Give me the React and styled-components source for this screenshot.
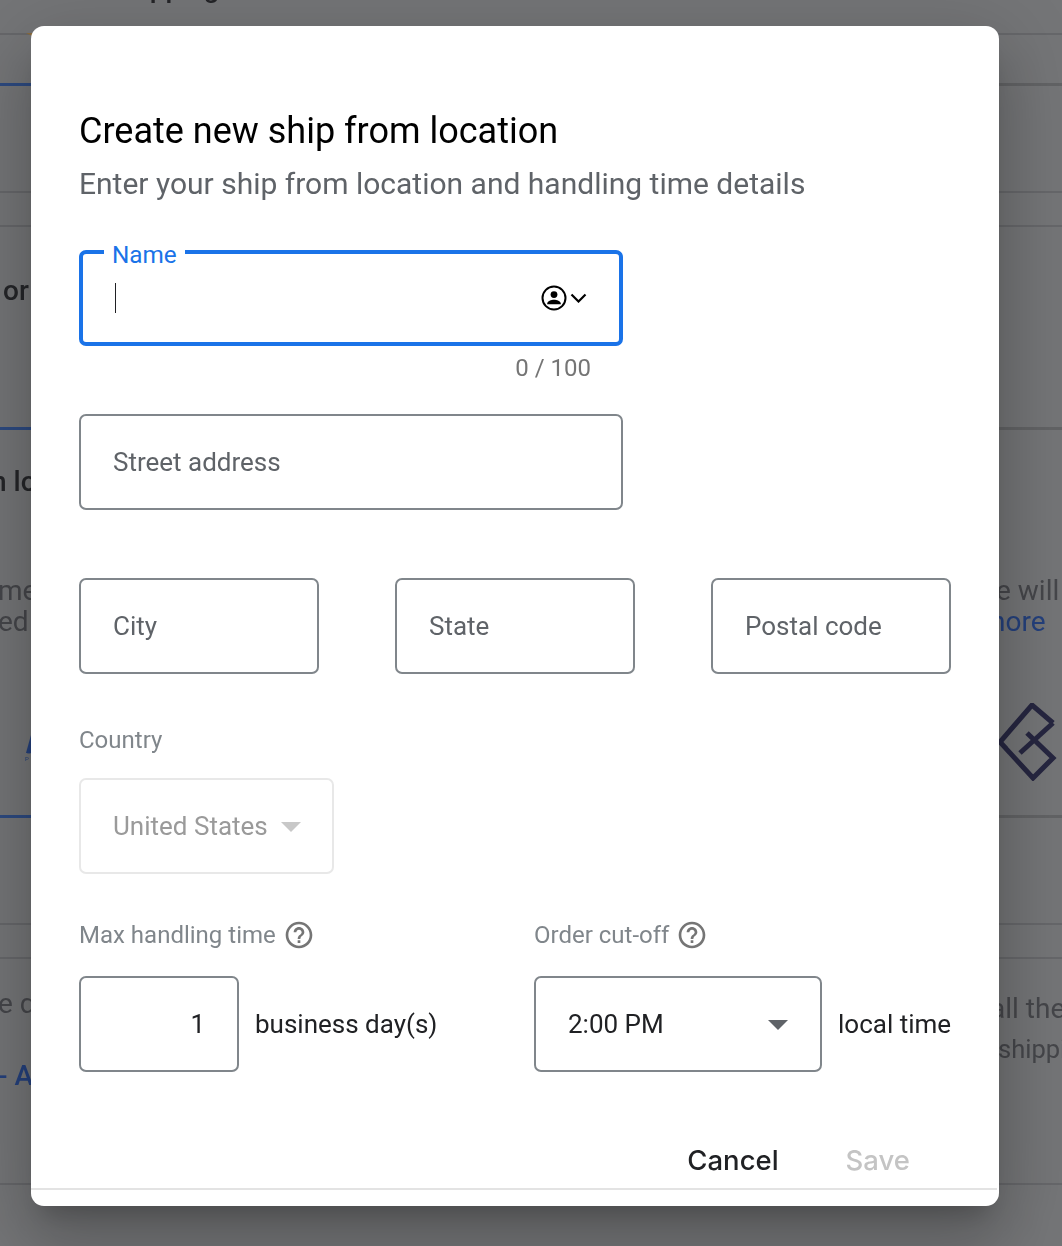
import React from "react";
import styled, { createGlobalStyle } from "styled-components";

const GlobalStyle = createGlobalStyle`
  html, body {
    margin: 0;
    padding: 0;
    background: #6f7072;
    font-family: Roboto, "Liberation Sans", sans-serif;
  }
`;

const Page = styled.div`
  position: relative;
  width: 1062px;
  height: 1246px;
  overflow: hidden;
  background: #747577;
`;

// the page behind the scrim, only slivers of it show round the dialog
const Backdrop = styled.div`
  position: absolute;
  inset: 0;
  filter: blur(0.6px);
`;

const Rule = styled.div`
  position: absolute;
  left: 0;
  right: 0;
  top: ${(props) => props.top}px;
  height: ${(props) => props.size || 2}px;
  background: ${(props) => (props.thick ? "#626365" : "#66676a")};
`;

const AccentRule = styled.div`
  position: absolute;
  left: 0;
  width: 40px;
  top: ${(props) => props.top}px;
  height: 3px;
  background: #2d4a80;
`;

const Fragment = styled.span`
  position: absolute;
  left: ${(props) => props.x}px;
  top: ${(props) => props.y}px;
  font-size: ${(props) => props.size || 28}px;
  line-height: 32px;
  white-space: nowrap;
  font-weight: ${(props) => (props.strong ? 500 : 400)};
  color: ${(props) =>
    props.link ? "#24407c" : props.strong ? "#242528" : "#45464a"};
`;

const LogoMark = styled.svg`
  position: absolute;
  left: ${(props) => props.x}px;
  top: ${(props) => props.y}px;
`;

const Scrim = styled.div`
  position: absolute;
  inset: 0;
  display: flex;
  align-items: flex-start;
  padding: 26px 0 0 31px;
`;

const Dialog = styled.div`
  width: 968px;
  height: 1180px;
  box-sizing: border-box;
  display: flex;
  flex-direction: column;
  background: #fff;
  border-radius: 13px;
  padding: 85px 48px 0;
  box-shadow: 0 18px 25px -12px rgba(0, 0, 0, 0.2),
    0 40px 63px 5px rgba(0, 0, 0, 0.14), 0 15px 77px 13px rgba(0, 0, 0, 0.12);
`;

const Title = styled.h2`
  margin: 0;
  font-size: 36px;
  line-height: 40px;
  font-weight: 400;
  color: #000;
`;

const Subtitle = styled.p`
  margin: 13px 0 0;
  font-size: 30px;
  line-height: 40px;
  font-weight: 400;
  color: #5f6368;
`;

const Field = styled.div`
  position: relative;
  box-sizing: border-box;
  display: flex;
  align-items: center;
  justify-content: ${(props) => props.justify || "flex-start"};
  flex: none;
  width: ${(props) => props.width}px;
  height: 96px;
  padding: 0 32px;
  border: ${(props) => (props.focused ? 4 : 2)}px solid
    ${(props) =>
      props.focused ? "#1a73e8" : props.disabled ? "#e8e8e8" : "#80868b"};
  border-radius: 7px;
  font-size: 26px;
  color: ${(props) => (props.disabled ? "#9a9a9a" : "#202124")};
`;

const Placeholder = styled.span`
  color: #5f6368;
`;

const FloatingLabel = styled.span`
  position: absolute;
  left: 21px;
  top: -14px;
  padding: 0 8px;
  background: #fff;
  font-size: 24.3px;
  line-height: 30px;
  color: #1a73e8;
`;

const Caret = styled.span`
  width: 1px;
  height: 30px;
  background: #202124;
`;

const NameIcons = styled.div`
  position: absolute;
  right: 32px;
  top: 50%;
  transform: translateY(-50%);
  display: flex;
  align-items: center;
  gap: 3px;
`;

const Counter = styled.div`
  width: 512px;
  margin-top: 7px;
  text-align: right;
  font-size: 24px;
  line-height: 30px;
  color: #757575;
`;

const FieldRow = styled.div`
  display: flex;
  gap: 76px;
  margin-top: ${(props) => props.top}px;
`;

const SectionLabel = styled.div`
  display: flex;
  align-items: center;
  gap: 7px;
  font-size: 24px;
  line-height: 28px;
  color: #80868b;
`;

const Spaced = styled.div`
  margin-top: ${(props) => props.top}px;
`;

const TimingRow = styled.div`
  display: flex;
  margin-top: 45px;
`;

const TimingColumn = styled.div`
  width: ${(props) => props.width}px;
`;

const InlineControl = styled.div`
  display: flex;
  align-items: center;
  gap: 16px;
  margin-top: 25px;
  font-size: 26px;
  white-space: nowrap;
  color: #202124;
`;

const Arrow = styled.span`
  flex: none;
  width: 0;
  height: 0;
  margin-top: 1px;
  border-left: 10px solid transparent;
  border-right: 10px solid transparent;
  border-top: 10px solid ${(props) => (props.disabled ? "#c8c8c8" : "#5f6368")};
`;

const CountryValue = styled.span`
  margin-right: 13px;
  white-space: nowrap;
`;

const Actions = styled.div`
  display: flex;
  justify-content: flex-end;
  align-items: center;
  gap: 67px;
  margin-top: 70px;
  padding-right: 41px;
`;

const ActionButton = styled.button`
  border: 0;
  padding: 0;
  background: none;
  font-family: Inter, Roboto, sans-serif;
  font-size: 27.5px;
  line-height: 36px;
  font-weight: 500;
  color: ${(props) => (props.disabled ? "#c4c4c4" : "#202124")};
`;

const Divider = styled.div`
  height: 2px;
  margin: 10px -46px 0 -48px;
  background: #e3e3e3;
`;

const HelpIcon = () => (
  <svg width="32" height="32" viewBox="0 0 24 24" fill="#757575">
    <path d="M11 18h2v-2h-2v2zm1-16C6.48 2 2 6.48 2 12s4.48 10 10 10 10-4.48 10-10S17.52 2 12 2zm0 18c-4.41 0-8-3.59-8-8s3.59-8 8-8 8 3.59 8 8-3.59 8-8 8zm0-14c-2.21 0-4 1.79-4 4h2c0-1.1.9-2 2-2s2 .9 2 2c0 2-3 1.75-3 5h2c0-2.25 3-2.5 3-5 0-2.21-1.79-4-4-4z" />
  </svg>
);

const PersonIcon = () => (
  <svg width="26" height="26" viewBox="0 0 26 26">
    <circle cx="13" cy="13" r="11.5" fill="none" stroke="#000" strokeWidth="2" />
    <circle cx="13" cy="9.6" r="3.4" fill="#000" />
    <path d="M6.2 18.6c0-2.6 4.2-3.9 6.8-3.9s6.8 1.3 6.8 3.9v.6H6.2z" fill="#000" />
  </svg>
);

const ChevronIcon = () => (
  <svg width="17" height="10" viewBox="0 0 17 10">
    <path d="M1.5 1.5l7 7 7-7" fill="none" stroke="#000" strokeWidth="2.2" />
  </svg>
);

const App = () => (
  <>
    <GlobalStyle />
    <Page>
      <Backdrop>
        <Rule top={33} />
        <Rule top={83} size={3} thick />
        <Rule top={191} />
        <Rule top={225} />
        <Rule top={427} size={3} thick />
        <Rule top={815} size={3} thick />
        <Rule top={923} />
        <Rule top={957} />
        <Rule top={1183} />
        <AccentRule top={83} />
        <AccentRule top={427} />
        <AccentRule top={815} />
        <Fragment x={110} y={-28} strong>
          Shipping
        </Fragment>
        <Fragment x={3} y={275} strong>
          or
        </Fragment>
        <Fragment x={-9} y={466} strong>
          n lo
        </Fragment>
        <Fragment x={-2} y={575}>
          me
        </Fragment>
        <Fragment x={-2} y={606}>
          ed
        </Fragment>
        <Fragment x={-2} y={988}>
          e d
        </Fragment>
        <Fragment x={-2} y={1060} link strong>
          - A
        </Fragment>
        <Fragment x={975} y={466} strong>
          rs
        </Fragment>
        <Fragment x={996} y={575}>
          e will
        </Fragment>
        <Fragment x={990} y={606} link>
          nore
        </Fragment>
        <Fragment x={990} y={993}>
          all the
        </Fragment>
        <Fragment x={998} y={1033} size={25.5}>
          shippi
        </Fragment>
        <LogoMark x={998} y={703} width="60" height="78" viewBox="0 0 60 78">
          <path
            d="M55 20L34 2 2 39 35 75 55 55 29 30M55 20L22 50"
            fill="none"
            stroke="#262640"
            strokeWidth="5"
          />
        </LogoMark>
        <LogoMark x={24} y={733} width="10" height="22" viewBox="0 0 10 22">
          <path d="M2 20L7 2h3v18z" fill="#24407c" />
        </LogoMark>
        <LogoMark x={26} y={31} width="8" height="6" viewBox="0 0 8 6">
          <path d="M0 2h8v4z" fill="#8a6a3c" />
        </LogoMark>
        <Fragment x={27} y={736} size={6} link>
          U
        </Fragment>
        <Fragment x={25} y={743} size={6} link>
          P
        </Fragment>
      </Backdrop>
      <Scrim>
        <Dialog>
          <Title>Create new ship from location</Title>
          <Subtitle>Enter your ship from location and handling time details</Subtitle>

          <Spaced top={46}>
            <Field width={544} focused>
              <FloatingLabel>Name</FloatingLabel>
              <Caret />
              <NameIcons>
                <PersonIcon />
                <ChevronIcon />
              </NameIcons>
            </Field>
          </Spaced>
          <Counter>0 / 100</Counter>

          <FieldRow top={31}>
            <Field width={544}>
              <Placeholder>Street address</Placeholder>
            </Field>
          </FieldRow>

          <FieldRow top={68}>
            <Field width={240}>
              <Placeholder>City</Placeholder>
            </Field>
            <Field width={240}>
              <Placeholder>State</Placeholder>
            </Field>
            <Field width={240}>
              <Placeholder>Postal code</Placeholder>
            </Field>
          </FieldRow>

          <Spaced top={52}>
            <SectionLabel>Country</SectionLabel>
          </Spaced>
          <Spaced top={24}>
            <Field width={255} disabled>
              <CountryValue>United States</CountryValue>
              <Arrow disabled />
            </Field>
          </Spaced>

          <TimingRow>
            <TimingColumn width={455}>
              <SectionLabel>
                Max handling time <HelpIcon />
              </SectionLabel>
              <InlineControl>
                <Field width={160} justify="flex-end">
                  1
                </Field>
                business day(s)
              </InlineControl>
            </TimingColumn>
            <TimingColumn width={417}>
              <SectionLabel>
                Order cut-off <HelpIcon />
              </SectionLabel>
              <InlineControl>
                <Field width={288} justify="space-between">
                  2:00 PM
                  <Arrow />
                </Field>
                local time
              </InlineControl>
            </TimingColumn>
          </TimingRow>

          <Actions>
            <ActionButton>Cancel</ActionButton>
            <ActionButton disabled>Save</ActionButton>
          </Actions>
          <Divider />
        </Dialog>
      </Scrim>
    </Page>
  </>
);

export default App;
